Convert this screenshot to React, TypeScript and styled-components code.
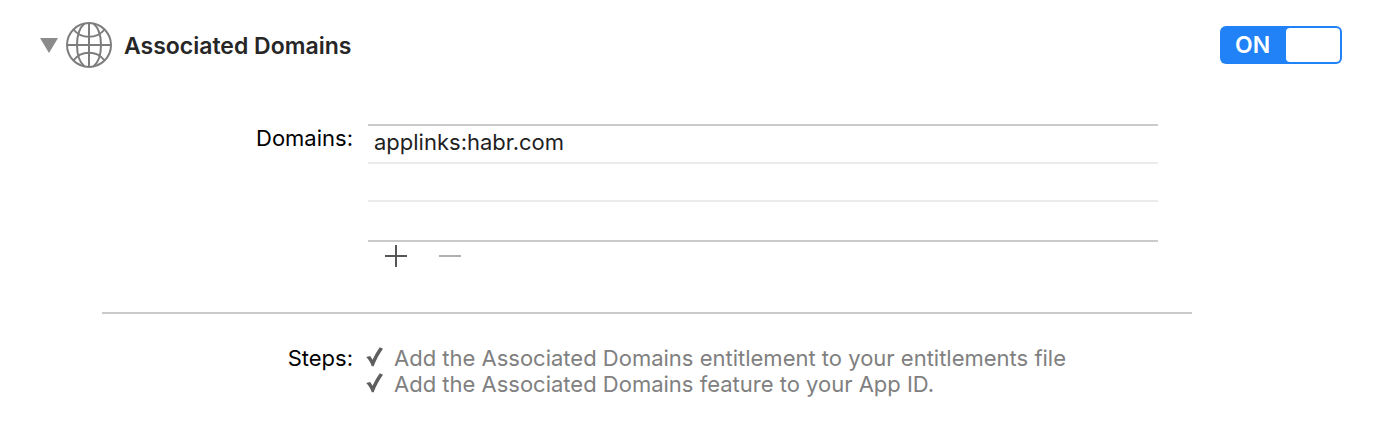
import React, { useState } from "react";
import styled, { createGlobalStyle } from "styled-components";

const GlobalStyle = createGlobalStyle`
  *, *::before, *::after { box-sizing: border-box; }
  body {
    margin: 0;
    background: #ffffff;
    color: #000000;
    font-family: Inter, "Liberation Sans", sans-serif;
    font-size: 22px;
    line-height: 26px;
  }
  button { font: inherit; }
`;

const Panel = styled.main`
  display: flex;
  flex-direction: column;
  padding: 22px 52px 26px 40px;
`;

const Header = styled.header`
  display: flex;
  align-items: center;
  height: 46px;
`;

const Disclosure = styled.button`
  display: flex;
  margin: 0 8px 0 0;
  padding: 0;
  border: 0;
  background: none;
`;

const Title = styled.h1`
  flex: 1;
  margin: 0 0 0 12px;
  padding-top: 2px;
  font-size: 23px;
  font-weight: 600;
  color: #262626;
`;

const Switch = styled.label`
  display: flex;
  align-items: center;
  justify-content: space-between;
  width: 122px;
  height: 38px;
  padding: 2px 2px 2px 15px;
  border-radius: 6px;
  background: #2182f7;
  color: #ffffff;
  font-size: 23px;
  font-weight: 600;
`;

const SwitchInput = styled.input`
  appearance: none;
  width: 54px;
  height: 34px;
  margin: 0;
  border-radius: 4px;
  background: #ffffff;
`;

const Body = styled.div`
  margin: 56px 150px 0 62px;
`;

const Field = styled.section<{ $gap: number }>`
  display: grid;
  grid-template-columns: 251px 1fr;
  column-gap: ${(p) => p.$gap}px;
`;

const Label = styled.span<{ $drop?: boolean }>`
  padding-top: ${(p) => (p.$drop ? "1px" : "0")};
  text-align: right;
`;

const DomainsColumn = styled.div`
  margin-right: 34px;
`;

const DomainTable = styled.table`
  width: 100%;
  border-collapse: separate;
  border-spacing: 0;
  border-top: 2px solid #cacaca;
  border-bottom: 2px solid #cacaca;
`;

const DomainCell = styled.td`
  height: 38px;
  padding: 0 6px 4px;
  color: #1f1f1f;
  tr:not(:last-child) > & {
    border-bottom: 2px solid #ebebeb;
  }
`;

const Tools = styled.div`
  display: flex;
  gap: 32px;
  padding: 3px 17px 0;
`;

const ToolButton = styled.button`
  display: flex;
  padding: 0;
  border: 0;
  background: none;
  color: #555555;
  &:disabled {
    color: #b0b0b0;
  }
`;

const Divider = styled.hr`
  height: 2px;
  margin: 45px 0 31px;
  border: 0;
  background: #cacaca;
`;

const Steps = styled.ul`
  margin: 0;
  padding: 0;
  list-style: none;
`;

const Step = styled.li`
  display: flex;
  align-items: flex-start;
  gap: 11px;
  color: #808080;
`;

const Globe = () => (
  <svg width="46" height="46" viewBox="0 0 46 46" fill="none" stroke="#7d7d7d" strokeWidth="2" aria-hidden="true">
    <circle cx="23" cy="23" r="22" />
    <path d="M23 1V45M1 23H45" />
    <path d="M18.500 1.500C8.500 10 8.500 36 18.500 44.500M27.500 1.500C37.500 10 37.500 36 27.500 44.500" />
    <path d="M7.500 7.500C15 17.200 31 17.200 38.500 7.500M7.500 38.500C15 28.200 31 28.200 38.500 38.500" />
  </svg>
);

const Check = () => (
  <svg width="17" height="22" viewBox="0 0 17 22" aria-hidden="true">
    <path d="M0.200 12L4.200 11L6.600 14.800C8.600 10.500 11 6 13.800 2.200L17 3.800C13 9.500 10 15 7.600 21.300H5.800C4.500 17.500 2.800 14.700 0.200 12Z" fill="#5e5e5e" />
  </svg>
);

const domains = ["applinks:habr.com", "", ""];
const steps = [
  "Add the Associated Domains entitlement to your entitlements file",
  "Add the Associated Domains feature to your App ID.",
];

export default function App() {
  const [on, setOn] = useState(true);
  return (
    <>
      <GlobalStyle />
      <Panel>
        <Header>
          <Disclosure type="button" aria-label="Collapse section" aria-expanded="true">
            <svg width="18" height="15" viewBox="0 0 18 15" aria-hidden="true">
              <path d="M0 0H18L9 15Z" fill="#8b8b8b" />
            </svg>
          </Disclosure>
          <Globe />
          <Title>Associated Domains</Title>
          <Switch>
            {on ? "ON" : "OFF"}
            <SwitchInput type="checkbox" role="switch" checked={on} onChange={() => setOn(!on)} />
          </Switch>
        </Header>
        <Body>
          <Field $gap={15}>
            <Label id="domains-label" $drop>Domains:</Label>
            <DomainsColumn>
              <DomainTable aria-labelledby="domains-label">
                <tbody>
                  {domains.map((domain, i) => (
                    <tr key={i}>
                      <DomainCell>{domain}</DomainCell>
                    </tr>
                  ))}
                </tbody>
              </DomainTable>
              <Tools>
                <ToolButton type="button" aria-label="Add domain">
                  <svg width="22" height="22" viewBox="0 0 22 22" stroke="currentColor" strokeWidth="2">
                    <path d="M11 0V22M0 11H22" />
                  </svg>
                </ToolButton>
                <ToolButton type="button" aria-label="Remove domain" disabled>
                  <svg width="22" height="22" viewBox="0 0 22 22" stroke="currentColor" strokeWidth="2">
                    <path d="M0 11H22" />
                  </svg>
                </ToolButton>
              </Tools>
            </DomainsColumn>
          </Field>
          <Divider />
          <Field $gap={13}>
            <Label id="steps-label">Steps:</Label>
            <Steps aria-labelledby="steps-label">
              {steps.map((step) => (
                <Step key={step}>
                  <Check />
                  {step}
                </Step>
              ))}
            </Steps>
          </Field>
        </Body>
      </Panel>
    </>
  );
}
